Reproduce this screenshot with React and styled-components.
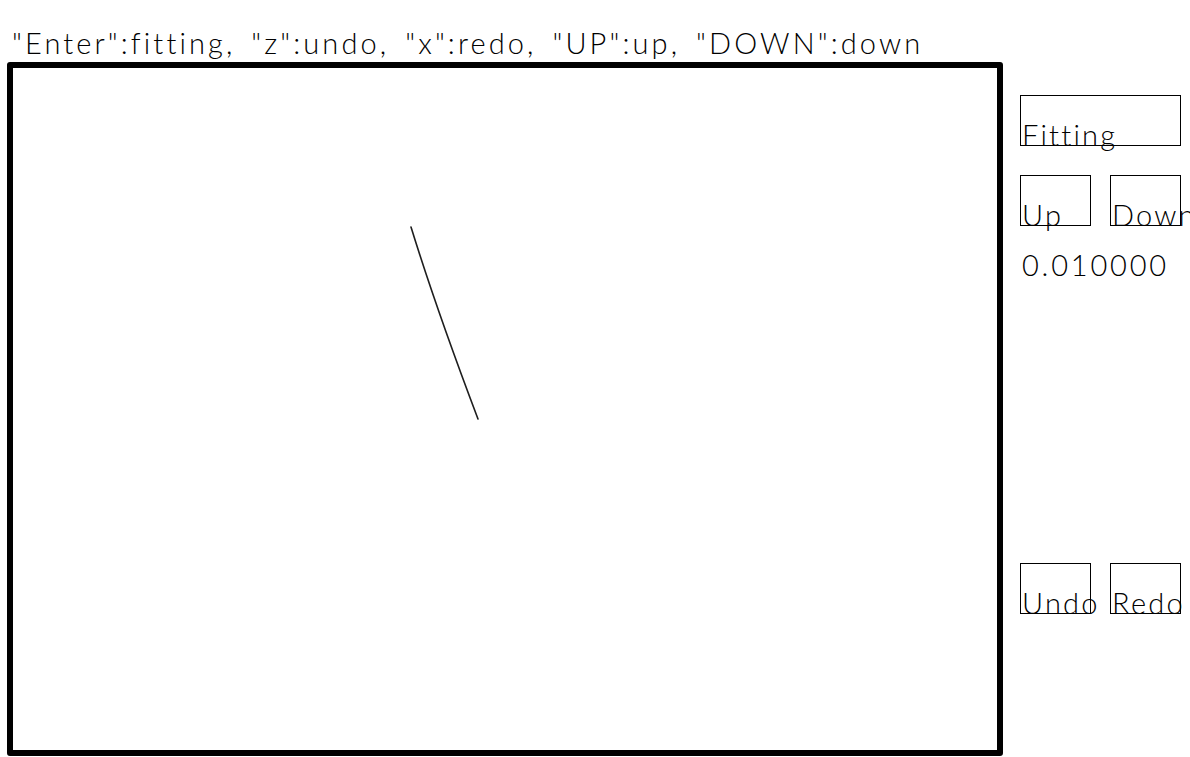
import React from 'react';
import styled, { createGlobalStyle } from 'styled-components';

const GlobalStyle = createGlobalStyle`
  html, body {
    margin: 0;
    padding: 0;
    background: #ffffff;
  }
  body {
    font-family: "Lato", "Liberation Sans", sans-serif;
    font-weight: 300;
    color: #000;
  }
`;

const App = () => {
  return (
    <>
      <GlobalStyle />
      <Page>
        <Hint>"Enter":fitting, "z":undo, "x":redo, "UP":up, "DOWN":down</Hint>
        <Workspace>
          <Canvas>
            <svg width="984" height="682" viewBox="0 0 984 682">
              <path
                d="M398 159 Q 423 240 465 351"
                fill="none"
                stroke="#1e1e1e"
                strokeWidth="1.6"
                strokeLinecap="round"
              />
            </svg>
          </Canvas>
          <Panel>
            <Button $wide>
              <Label>Fitting</Label>
            </Button>
            <ButtonRow>
              <Button>
                <Label>Up</Label>
              </Button>
              <Button>
                <Label>Down</Label>
              </Button>
            </ButtonRow>
            <Value>0.010000</Value>
            <ButtonRow $bottom>
              <Button>
                <Label>Undo</Label>
              </Button>
              <Button>
                <Label>Redo</Label>
              </Button>
            </ButtonRow>
          </Panel>
        </Workspace>
      </Page>
    </>
  );
};

export default App;

const Page = styled.div`
  width: 1190px;
  height: 757px;
  overflow: hidden;
  font-size: 29px;
  line-height: 29px;
  letter-spacing: 2.2px;
`;

const Hint = styled.div`
  height: 62px;
  box-sizing: border-box;
  padding: 28px 0 0 12px;
  white-space: nowrap;
  letter-spacing: 3.1px;
  word-spacing: 5px;
`;

const Workspace = styled.div`
  display: flex;
  padding-left: 7px;
  height: 695px;
`;

const Canvas = styled.div`
  width: 996px;
  height: 694px;
  flex-shrink: 0;
  border: 6px solid #000;
  border-radius: 3px;
  box-sizing: border-box;

  svg {
    display: block;
  }
`;

const Panel = styled.div`
  display: flex;
  flex-direction: column;
  margin-left: 17px;
  padding-top: 33px;
`;

const ButtonRow = styled.div`
  display: flex;
  gap: 19px;
  margin-top: ${(p) => (p.$bottom ? '284px' : '29px')};
`;

const Button = styled.div`
  width: ${(p) => (p.$wide ? '161px' : '71px')};
  height: 51px;
  border: 1px solid #000;
  box-sizing: border-box;
  display: flex;
  align-items: flex-end;
  white-space: nowrap;
`;

const Label = styled.span`
  display: block;
  margin-bottom: -4px;
  padding-left: 1px;
`;

const Value = styled.div`
  margin-top: 24px;
  padding-left: 2px;
  height: 29px;
  letter-spacing: 2.8px;
`;
